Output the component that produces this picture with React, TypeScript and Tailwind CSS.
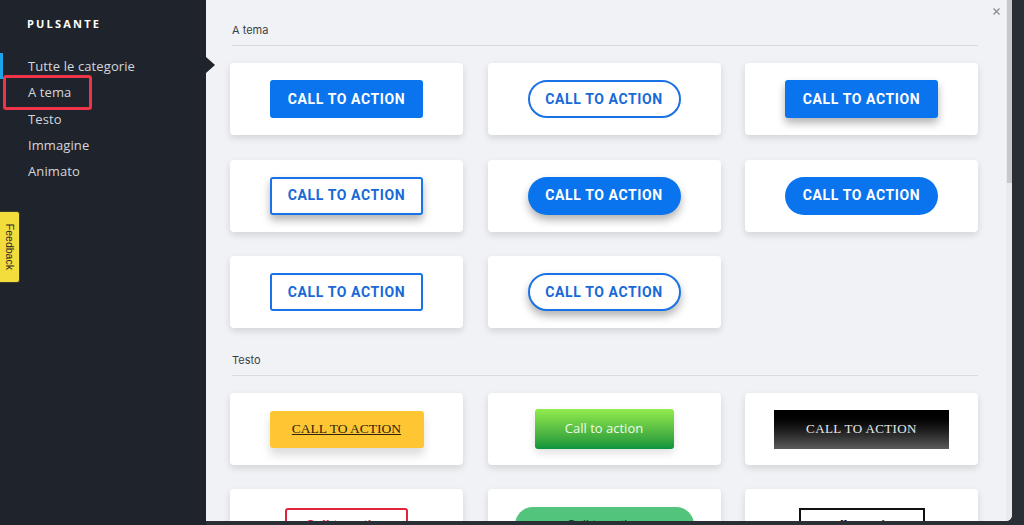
import React from "react";

const roboto = { fontFamily: "Roboto, 'Liberation Sans', sans-serif" };

const BLUE = "bg-[#0a74ef]";

type Variant = {
  kind: "fill" | "outline";
  pill?: boolean;
  shadow?: boolean;
};

const CtaButton = ({ kind, pill, shadow }: Variant) => {
  const shape = pill ? "rounded-full" : "rounded-[3px]";
  const look =
    kind === "fill"
      ? `${BLUE} text-white`
      : "bg-white border-2 border-[#1a72e6] text-[#1769d8]";
  const drop = shadow ? "shadow-[0_5px_8px_rgba(0,0,0,0.3)]" : "";
  return (
    <div
      className={`w-[153px] h-[38px] flex items-center justify-center text-[14px] font-bold tracking-[0.6px] ${shape} ${look} ${drop}`}
      style={roboto}
    >
      CALL TO ACTION
    </div>
  );
};

const Card = ({ children }: { children: React.ReactNode }) => (
  <div className="h-[72px] bg-white rounded-[4px] shadow-[0_3px_7px_rgba(0,0,0,0.13)] flex items-center justify-center">
    {children}
  </div>
);

const SectionTitle = ({ label, top }: { label: string; top: string }) => (
  <div
    className={`${top} pb-[8px] ml-[2px] border-b border-[#d9dcdf] text-[11px] leading-[14px] text-[#3b3f44]`}
    style={{ fontFamily: "Inter, 'Liberation Sans', sans-serif" }}
  >
    {label}
  </div>
);

const themed: Variant[] = [
  { kind: "fill" },
  { kind: "outline", pill: true },
  { kind: "fill", shadow: true },
  { kind: "outline", shadow: true },
  { kind: "fill", pill: true, shadow: true },
  { kind: "fill", pill: true },
  { kind: "outline" },
  { kind: "outline", pill: true, shadow: true },
];

const menu = ["Tutte le categorie", "A tema", "Testo", "Immagine", "Animato"];

export default function App() {
  return (
    <div className="w-[1024px] h-[525px] flex bg-[#2a2f35] overflow-hidden">
      {/* sidebar */}
      <div
        className="relative w-[206px] h-[525px] bg-[#1f242c] pl-[27px] pt-[17px]"
        style={{ fontFamily: "'Open Sans', 'Noto Sans', sans-serif" }}
      >
        <div className="text-[11px] leading-[14px] font-bold tracking-[2.2px] text-white">
          PULSANTE
        </div>
        <div className="mt-[22px] flex flex-col">
          {menu.map((m) => (
            <div
              key={m}
              className="text-[13px] leading-[26.25px] tracking-[0.1px] text-[#d3d6db] pl-[1px]"
            >
              {m}
            </div>
          ))}
        </div>

        <div className="absolute left-0 top-[53px] w-[3px] h-[26px] bg-[#1ea3e8]" />
        <div className="absolute left-[3px] top-[75px] w-[89px] h-[35px] border-[3px] border-[#ef3449] rounded-[3px]" />

        <div className="absolute left-0 top-[211px] w-[20px] h-[72px] bg-[#f3dd3c] border border-[#3a3a2a] border-l-0 rounded-r-[3px] flex items-center justify-center">
          <span
            className="text-[10.5px] text-[#2b2b2b] whitespace-nowrap rotate-90"
            style={{ fontFamily: "'Liberation Sans', Arial, sans-serif" }}
          >
            Feedback
          </span>
        </div>

        <div className="absolute left-[206px] top-[57px] w-0 h-0 border-y-[8px] border-y-transparent border-l-[9px] border-l-[#1f242c] z-10" />
      </div>

      {/* panel */}
      <div className="relative w-[806px] h-[521px] bg-[#f0f2f5] rounded-br-[6px] flex overflow-hidden">
        <div className="flex-1 pl-[24px] pr-[28px] overflow-hidden">
          <SectionTitle label="A tema" top="pt-[23px]" />
          <div className="mt-[17px] grid grid-cols-3 gap-x-[24.5px] gap-y-[24.5px]">
            {themed.map((v, i) => (
              <Card key={i}>
                <CtaButton {...v} />
              </Card>
            ))}
          </div>

          <SectionTitle label="Testo" top="pt-[25px]" />
          <div className="mt-[17px] grid grid-cols-3 gap-x-[24.5px] gap-y-[24px]">
            <Card>
              <div
                className="w-[154px] h-[37px] bg-[#ffc634] rounded-[3px] shadow-[0_7px_10px_rgba(0,0,0,0.14)] flex items-center justify-center text-[13.5px] underline text-[#2e2410]"
                style={{ fontFamily: "'Liberation Serif', 'Times New Roman', serif" }}
              >
                CALL TO ACTION
              </div>
            </Card>
            <Card>
              <div
                className="w-[139px] h-[40px] bg-gradient-to-b from-[#92ec4c] to-[#04943a] rounded-[3px] shadow-[0_4px_8px_rgba(0,0,0,0.12)] flex items-center justify-center text-[13px] text-[#eefbe9]"
                style={{ fontFamily: "'Open Sans', 'Noto Sans', sans-serif" }}
              >
                Call to action
              </div>
            </Card>
            <Card>
              <div
                className="w-[175px] h-[39px] bg-gradient-to-b from-[#000000] via-[#1c1c1c] to-[#5c5c5c] flex items-center justify-center text-[13px] tracking-[0.4px] text-[#e9e9e9]"
                style={{ fontFamily: "'Liberation Serif', 'Times New Roman', serif" }}
              >
                CALL TO ACTION
              </div>
            </Card>
            <Card>
              <div
                className="w-[123px] h-[35px] border-2 border-[#e2233d] rounded-[3px] flex items-center justify-center text-[13px] font-bold text-[#e2233d]"
                style={{ fontFamily: "'Liberation Sans', Arial, sans-serif" }}
              >
                Call to action
              </div>
            </Card>
            <Card>
              <div
                className="w-[179px] h-[36px] bg-[#52c47c] rounded-full flex items-center justify-center text-[13px] text-[#1f3a2a]"
                style={{ fontFamily: "'Liberation Sans', Arial, sans-serif" }}
              >
                Call to action
              </div>
            </Card>
            <Card>
              <div
                className="w-[126px] h-[35px] border-2 border-[#111111] flex items-center justify-center text-[13px] font-bold text-[#111111]"
                style={{ fontFamily: "'Liberation Serif', 'Times New Roman', serif" }}
              >
                Call to action
              </div>
            </Card>
          </div>
        </div>

        {/* scrollbar */}
        <div className="w-[6px] h-full bg-[#e9eaec] flex justify-center">
          <div className="w-[5px] h-[183px] bg-[#c6c8cb]" />
        </div>

        <svg
          className="absolute right-[12px] top-[8px]"
          width="7"
          height="7"
          viewBox="0 0 7 7"
          stroke="#8a8d91"
          strokeWidth="1.3"
        >
          <path d="M0.5 0.5L6.5 6.5M6.5 0.5L0.5 6.5" />
        </svg>
      </div>
    </div>
  );
}
